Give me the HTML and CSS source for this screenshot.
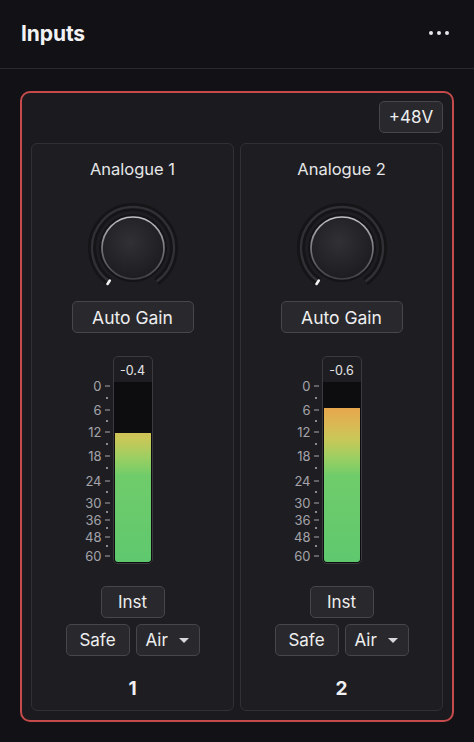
FILE: index.html
```html
<!DOCTYPE html>
<html>
<head>
<meta charset="utf-8">
<link rel="stylesheet" href="styles.css">
</head>
<body>
<header class="topbar">
  <h1 class="title">Inputs</h1>
  <div class="more"><span></span><span></span><span></span></div>
</header>

<section class="frame">
  <div class="frame-top">
    <button class="btn phantom">+48V</button>
  </div>
  <div class="channels">
    <div class="channel">
      <div class="ch-name">Analogue 1</div>
      <svg class="knob" width="90" height="90" viewBox="0 0 90 90">
        <defs>
          <radialGradient id="kb1" cx="45%" cy="40%" r="60%">
            <stop offset="0" stop-color="#303035"/>
            <stop offset="1" stop-color="#1d1d21"/>
          </radialGradient>
          <linearGradient id="rim1" x1="0" y1="0" x2="0" y2="1">
            <stop offset="0" stop-color="#c0c0c6"/>
            <stop offset="0.55" stop-color="#707076"/>
            <stop offset="1" stop-color="#404046"/>
          </linearGradient>
        </defs>
        <path d="M21.5 78.6 A41 41 0 1 1 68.5 78.6" fill="none" stroke="#151518" stroke-width="8"/>
        <path d="M21.5 78.6 A41 41 0 1 1 68.5 78.6" fill="none" stroke="#303035" stroke-width="2.4"/>
        <circle cx="45" cy="45" r="34" fill="#141417"/>
        <circle cx="45" cy="45" r="31" fill="url(#kb1)" stroke="url(#rim1)" stroke-width="1.7"/>
        <line x1="19.5" y1="81" x2="21.8" y2="77.6" stroke="#f2f2f2" stroke-width="2.6" stroke-linecap="round"/>
      </svg>
      <button class="btn autogain">Auto Gain</button>
      <div class="meter-wrap">
        <div class="scale">
          <div class="tick" style="top:30px"><span>0</span><i></i></div>
          <div class="dot" style="top:42px"></div>
          <div class="tick" style="top:54px"><span>6</span><i></i></div>
          <div class="dot" style="top:65px"></div>
          <div class="tick" style="top:76px"><span>12</span><i></i></div>
          <div class="dot" style="top:88px"></div>
          <div class="tick" style="top:100px"><span>18</span><i></i></div>
          <div class="dot" style="top:112px"></div>
          <div class="tick" style="top:125px"><span>24</span><i></i></div>
          <div class="dot" style="top:136px"></div>
          <div class="tick" style="top:147px"><span>30</span><i></i></div>
          <div class="dot" style="top:156px"></div>
          <div class="tick" style="top:164px"><span>36</span><i></i></div>
          <div class="dot" style="top:172px"></div>
          <div class="tick" style="top:181px"><span>48</span><i></i></div>
          <div class="dot" style="top:190px"></div>
          <div class="tick" style="top:200px"><span>60</span><i></i></div>
        </div>
        <div class="meter">
          <div class="meter-val">-0.4</div>
          <div class="meter-body"><div class="meter-empty" style="height:51px"></div></div>
        </div>
      </div>
      <button class="btn small inst">Inst</button>
      <div class="row">
        <button class="btn small">Safe</button>
        <button class="btn small select">Air <span class="caret"></span></button>
      </div>
      <div class="ch-num">1</div>
    </div>

    <div class="channel">
      <div class="ch-name">Analogue 2</div>
      <svg class="knob" width="90" height="90" viewBox="0 0 90 90">
        <defs>
          <radialGradient id="kb2" cx="45%" cy="40%" r="60%">
            <stop offset="0" stop-color="#303035"/>
            <stop offset="1" stop-color="#1d1d21"/>
          </radialGradient>
          <linearGradient id="rim2" x1="0" y1="0" x2="0" y2="1">
            <stop offset="0" stop-color="#c0c0c6"/>
            <stop offset="0.55" stop-color="#707076"/>
            <stop offset="1" stop-color="#404046"/>
          </linearGradient>
        </defs>
        <path d="M21.5 78.6 A41 41 0 1 1 68.5 78.6" fill="none" stroke="#151518" stroke-width="8"/>
        <path d="M21.5 78.6 A41 41 0 1 1 68.5 78.6" fill="none" stroke="#303035" stroke-width="2.4"/>
        <circle cx="45" cy="45" r="34" fill="#141417"/>
        <circle cx="45" cy="45" r="31" fill="url(#kb2)" stroke="url(#rim2)" stroke-width="1.7"/>
        <line x1="19.5" y1="81" x2="21.8" y2="77.6" stroke="#f2f2f2" stroke-width="2.6" stroke-linecap="round"/>
      </svg>
      <button class="btn autogain">Auto Gain</button>
      <div class="meter-wrap">
        <div class="scale">
          <div class="tick" style="top:30px"><span>0</span><i></i></div>
          <div class="dot" style="top:42px"></div>
          <div class="tick" style="top:54px"><span>6</span><i></i></div>
          <div class="dot" style="top:65px"></div>
          <div class="tick" style="top:76px"><span>12</span><i></i></div>
          <div class="dot" style="top:88px"></div>
          <div class="tick" style="top:100px"><span>18</span><i></i></div>
          <div class="dot" style="top:112px"></div>
          <div class="tick" style="top:125px"><span>24</span><i></i></div>
          <div class="dot" style="top:136px"></div>
          <div class="tick" style="top:147px"><span>30</span><i></i></div>
          <div class="dot" style="top:156px"></div>
          <div class="tick" style="top:164px"><span>36</span><i></i></div>
          <div class="dot" style="top:172px"></div>
          <div class="tick" style="top:181px"><span>48</span><i></i></div>
          <div class="dot" style="top:190px"></div>
          <div class="tick" style="top:200px"><span>60</span><i></i></div>
        </div>
        <div class="meter">
          <div class="meter-val">-0.6</div>
          <div class="meter-body"><div class="meter-empty" style="height:26px"></div></div>
        </div>
      </div>
      <button class="btn small inst">Inst</button>
      <div class="row">
        <button class="btn small">Safe</button>
        <button class="btn small select">Air <span class="caret"></span></button>
      </div>
      <div class="ch-num">2</div>
    </div>
  </div>
</section>
</body>
</html>
```

FILE: styles.css
```css
* { box-sizing: border-box; }

html, body {
  margin: 0;
  padding: 0;
  background: #121216;
}

body {
  width: 474px;
  height: 742px;
  overflow: hidden;
  font-family: Inter, "Noto Sans", sans-serif;
  color: #ececee;
}

.topbar {
  height: 69px;
  padding: 0 25px 0 21px;
  display: flex;
  align-items: center;
  justify-content: space-between;
  border-bottom: 1px solid #2a2a2f;
}

.title {
  margin: 0 0 2px 0;
  font-size: 21px;
  font-weight: 700;
  letter-spacing: -0.1px;
  color: #f2f2f4;
}

.more {
  display: flex;
  gap: 4px;
  margin-bottom: 2px;
}

.more span {
  width: 4px;
  height: 4px;
  border-radius: 50%;
  background: #e6e6e8;
}

.frame {
  margin: 22px 0 0 20px;
  width: 434px;
  height: 631px;
  border: 2px solid #c44a4b;
  border-radius: 10px;
  background: #1b1b1f;
  padding: 8px 9px 8px 9px;
}

.frame-top {
  display: flex;
  justify-content: flex-end;
  margin-bottom: 10px;
}

.btn {
  font-family: Inter, "Noto Sans", sans-serif;
  background: #29292d;
  border: 1px solid #46464b;
  border-radius: 5px;
  color: #eeeeef;
  padding: 0;
  display: flex;
  align-items: center;
  justify-content: center;
}

.phantom {
  width: 64px;
  height: 32px;
  font-size: 17px;
}

.channels {
  display: grid;
  grid-template-columns: 1fr 1fr;
  gap: 6px;
}

.channel {
  height: 568px;
  background: #1e1e22;
  border: 1px solid #303035;
  border-radius: 6px;
  display: flex;
  flex-direction: column;
  align-items: center;
  padding-top: 15px;
}

.ch-name {
  font-size: 16.5px;
  line-height: 20px;
  color: #e6e6e8;
}

.knob {
  display: block;
  margin-top: 24px;
}

.autogain {
  margin-top: 8px;
  width: 122px;
  height: 32px;
  font-size: 17.5px;
}

.meter-wrap {
  margin-top: 23px;
  width: 100%;
  display: grid;
  grid-template-columns: 1fr 40px 1fr;
}

.scale {
  position: relative;
  height: 208px;
}

.tick {
  position: absolute;
  right: 3px;
  transform: translateY(-50%);
  display: flex;
  align-items: center;
  gap: 3px;
  font-size: 13px;
  line-height: 15px;
  color: #a4a4aa;
}

.tick i {
  display: block;
  width: 5px;
  height: 1.5px;
  background: #a4a4aa;
}

.dot {
  position: absolute;
  right: 5px;
  width: 2px;
  height: 2px;
  margin-top: -1px;
  background: #8a8a90;
}

.meter {
  width: 40px;
  height: 208px;
  border: 1px solid #3a3a3f;
  border-radius: 5px;
  overflow: hidden;
  display: flex;
  flex-direction: column;
  background: #1e1e22;
}

.meter-val {
  height: 25px;
  flex: none;
  display: flex;
  align-items: center;
  justify-content: center;
  padding-top: 2px;
  font-size: 12.5px;
  color: #e4e4e6;
}

.meter-body {
  flex: 1;
  border: 1px solid #0d0d10;
  border-top: none;
  border-radius: 0 0 4px 4px;
  background: linear-gradient(to bottom,
    #e8923f 0%,
    #e8a64b 14%,
    #d6bd55 26%,
    #c8c858 32%,
    #9ccf62 42%,
    #70cc6a 52%,
    #5fc86e 100%);
  overflow: hidden;
}

.meter-empty {
  background: #0d0d10;
}

.small {
  width: 64px;
  height: 32px;
  font-size: 17px;
}

.inst {
  margin-top: 22px;
}

.row {
  margin-top: 6px;
  display: flex;
  gap: 6px;
}

.select {
  justify-content: flex-start;
  padding-left: 9px;
  gap: 0;
}

.caret {
  margin-left: 11px;
  width: 0;
  height: 0;
  border-left: 5px solid transparent;
  border-right: 5px solid transparent;
  border-top: 5px solid #d8d8dc;
}

.ch-num {
  margin-top: 22px;
  font-size: 19px;
  font-weight: 700;
  line-height: 22px;
  color: #f0f0f2;
}
```
